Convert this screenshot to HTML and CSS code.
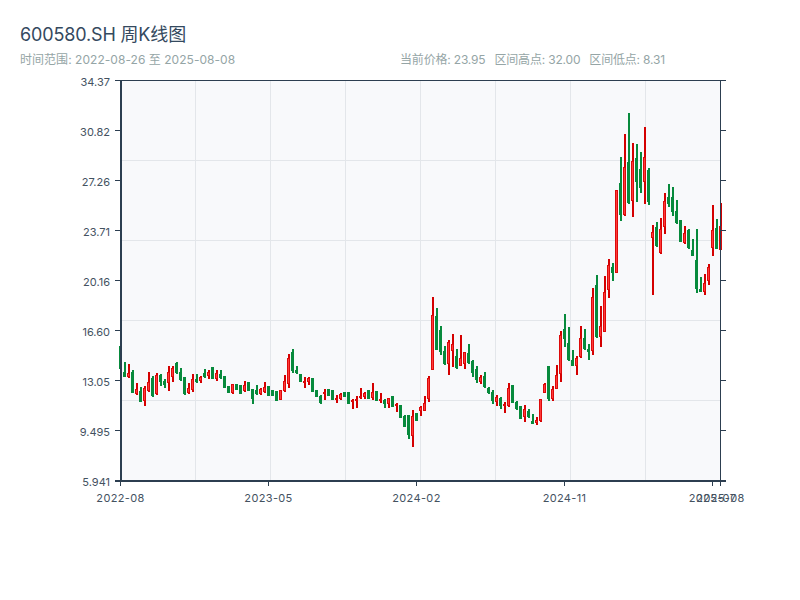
FILE: index.html
```html
<!DOCTYPE html>
<html lang="zh-CN">
<head>
  <meta charset="UTF-8" />
  <title>600580.SH 周K线图</title>
  <link rel="stylesheet" href="styles.css">
</head>
<body>
  <h1 class="title">600580.SH 周K线图</h1>
  <div class="meta">
    <div class="meta-range">时间范围: 2022-08-26 至 2025-08-08</div>
    <div class="meta-stats">
      <span>当前价格: 23.95</span>
      <span>区间高点: 32.00</span>
      <span>区间低点: 8.31</span>
    </div>
  </div>

  <!-- viewBox starts at y=70 so chart coordinates are the page's pixel rows -->
  <svg id="chart" class="chart" viewBox="0 70 800 530" width="800" height="530"></svg>

  <script src="chart.js"></script>
</body>
</html>
```

FILE: styles.css
```css
html, body { margin: 0; padding: 0; background: #fff; }
body {
  width: 800px;
  height: 600px;
  overflow: hidden;
  font-family: Inter, "Noto Sans CJK SC", sans-serif;
}
.title {
  margin: 0;
  padding: 23px 20px 0;
  font-size: 18px;
  line-height: 24px;
  font-weight: 400;
  letter-spacing: -0.15px;
  color: #34495e;
}
.meta {
  display: flex;
  padding: 5px 20px 0;
  height: 18px;
  font-size: 12px;
  line-height: 16px;
  color: #95a5a6;
}
.meta-range { width: 380px; letter-spacing: 0.04px; }
.meta-stats { display: flex; gap: 9px; letter-spacing: -0.18px; }
.chart { display: block; }

.plot { fill: #f8f9fb; }
.grid { stroke: #e3e6ea; stroke-width: 1; }
.axis { stroke: #2c3e50; stroke-width: 1; }
.axis-main { stroke: #2c3e50; stroke-width: 2; }
.label { font-size: 11px; fill: #44525f; }
.label-y { text-anchor: end; }
.label-x { text-anchor: middle; letter-spacing: 0.35px; }

.wick-up { fill: #d40000; }
.body-up { fill: #ff3a3a; stroke: #dc0a0a; stroke-width: 1; }
.wick-down { fill: #078a3c; }
.body-down { fill: #078a3c; stroke: #078a3c; stroke-width: 1; }
```

FILE: chart.js
```js
const NS = 'http://www.w3.org/2000/svg';
const svg = document.getElementById('chart');

const LEFT = 120, RIGHT = 720, TOP = 81, BOTTOM = 481;

// Weekly candles in page pixel rows: [high, body top, body bottom, low, up?]
const candles = [
  [346,346,369,369,0],[362,372,377,377,0],[364,373,377,378,1],[370,372,393,393,0],[383,389,394,395,1],
  [387,391,402,402,0],[386,388,401,406,1],[372,382,391,392,1],[376,378,396,397,0],[373,375,394,395,1],
  [374,375,382,386,0],[379,381,385,388,0],[366,372,383,391,1],[366,368,377,382,1],[362,363,373,374,0],
  [368,372,380,381,0],[377,377,394,395,0],[383,388,393,394,1],[374,379,390,392,1],[374,379,382,383,0],
  [376,377,381,383,1],[369,373,377,378,0],[370,372,376,379,1],[367,367,379,379,0],[370,373,379,381,1],
  [370,374,378,379,0],[376,376,388,388,0],[386,386,393,393,0],[384,384,393,394,1],[384,384,390,390,0],
  [385,385,394,394,0],[381,385,391,392,1],[382,382,391,391,0],[389,389,399,404,0],[385,390,394,395,0],
  [388,389,394,395,1],[382,387,392,393,1],[386,386,396,396,0],[390,390,396,396,0],[391,391,401,401,0],
  [390,390,400,400,1],[375,381,391,392,1],[354,358,384,388,1],[349,352,371,373,0],[366,370,373,374,0],
  [374,374,382,382,0],[377,381,383,388,1],[377,378,382,385,1],[378,378,392,392,0],[390,390,397,397,0],
  [395,396,403,404,0],[389,392,394,400,1],[389,389,396,396,0],[390,390,400,400,0],[395,398,400,403,1],
  [393,394,399,400,1],[392,392,397,397,0],[392,392,404,404,0],[399,400,402,409,1],[396,399,401,408,1],
  [388,396,398,399,1],[392,393,397,399,1],[390,390,399,399,0],[383,392,398,400,1],[391,391,401,401,0],
  [393,399,401,403,1],[399,400,404,408,0],[398,398,404,408,1],[396,396,407,407,0],[403,404,406,412,1],
  [405,405,418,418,0],[415,416,427,427,0],[415,415,435,439,0],[410,416,436,447,1],[413,413,421,421,0],
  [406,407,411,416,1],[396,403,411,411,1],[376,378,399,402,1],[297,315,370,370,1],[308,316,350,350,0],
  [326,330,352,355,0],[346,351,364,365,0],[340,342,364,375,1],[334,344,351,367,1],[349,356,368,369,0],
  [335,358,366,366,1],[352,352,364,369,1],[344,353,363,364,0],[360,361,373,377,0],[366,369,380,383,0],
  [375,377,382,384,1],[372,376,387,388,0],[387,388,393,394,0],[390,392,401,404,0],[395,397,402,406,1],
  [397,398,406,409,0],[402,404,406,413,1],[383,388,406,407,1],[385,385,403,403,0],[401,402,409,410,0],
  [406,406,419,419,0],[405,409,417,422,1],[409,411,417,418,0],[414,421,424,424,0],[417,420,423,425,1],
  [399,399,421,422,1],[383,384,393,393,1],[366,366,399,401,0],[386,389,399,401,1],[365,375,389,389,1],
  [331,335,374,382,1],[314,329,339,347,0],[327,343,360,361,0],[350,360,366,366,0],[356,358,366,375,1],
  [326,338,357,358,1],[329,338,349,350,0],[344,349,352,360,0],[288,297,351,355,1],[275,285,337,338,0],
  [306,326,337,347,1],[276,292,332,332,1],[259,265,290,298,1],[263,267,273,281,0],[190,190,273,273,1],
  [157,183,215,221,0],[134,167,215,216,1],[113,162,203,204,0],[143,161,201,217,1],[144,158,182,202,0],
  [152,169,188,193,0],[127,157,182,204,1],[168,170,202,205,0],[225,232,238,295,1],[222,227,246,247,0],
  [218,229,253,254,1],[193,201,227,234,1],[184,197,204,207,0],[187,197,212,216,0],[200,211,223,224,0],
  [220,220,242,242,0],[226,233,243,244,1],[229,230,248,249,0],[239,250,256,256,0],[229,260,289,293,0],
  [277,289,292,292,0],[274,283,292,295,1],[264,267,281,285,1],[205,230,248,256,1],[219,228,249,249,0],
  [203,226,250,250,1]
];

const yLabels = ['34.37', '30.82', '27.26', '23.71', '20.16', '16.60', '13.05', '9.495', '5.941'];
const xLabels = [[120, '2022-08'], [268, '2023-05'], [416, '2024-02'], [564, '2024-11'], [712, '2025-07'], [720, '2025-08']];

function add(tag, attrs, text) {
  const el = document.createElementNS(NS, tag);
  for (const k in attrs) el.setAttribute(k, attrs[k]);
  if (text) el.textContent = text;
  svg.appendChild(el);
  return el;
}

function line(x1, y1, x2, y2, cls) {
  add('line', { x1, y1, x2, y2, class: cls });
}

add('rect', { x: LEFT, y: TOP, width: RIGHT - LEFT, height: BOTTOM - TOP, class: 'plot' });

// Grid
for (let x = 195; x < RIGHT; x += 75) line(x + 0.5, TOP, x + 0.5, BOTTOM, 'grid');
for (let y = 160; y < BOTTOM; y += 80) line(LEFT, y + 0.5, RIGHT, y + 0.5, 'grid');

// Candles (the first one sits half under the axis, only its wick shows)
candles.forEach((c, i) => {
  const x = i === 0 ? 120 : 121 + 4 * i;
  const kind = c[4] ? 'up' : 'down';
  add('rect', { x: x - 1, y: c[0], width: 2, height: c[3] - c[0], class: 'wick-' + kind });
  if (i > 0) add('rect', { x: x - 1.5, y: c[1] + 0.5, width: 2, height: c[2] - c[1] - 1, class: 'body-' + kind });
});

// Axes
line(121, TOP - 1, 121, BOTTOM + 1, 'axis-main');
line(115, BOTTOM, RIGHT + 6, BOTTOM, 'axis-main');
line(115, TOP - 0.5, RIGHT + 6, TOP - 0.5, 'axis');
line(RIGHT + 0.5, TOP, RIGHT + 0.5, BOTTOM, 'axis');

yLabels.forEach((label, i) => {
  const y = TOP + i * 50;
  line(115, y - 0.5, 120, y - 0.5, 'axis');
  line(RIGHT, y - 0.5, RIGHT + 6, y - 0.5, 'axis');
  add('text', { x: 110, y: y + 5, class: 'label label-y' }, label);
});

xLabels.forEach(([x, label]) => {
  line(x + 0.5, BOTTOM, x + 0.5, BOTTOM + 5, 'axis');
  add('text', { x: x + 0.5, y: 502, class: 'label label-x' }, label);
});
```
